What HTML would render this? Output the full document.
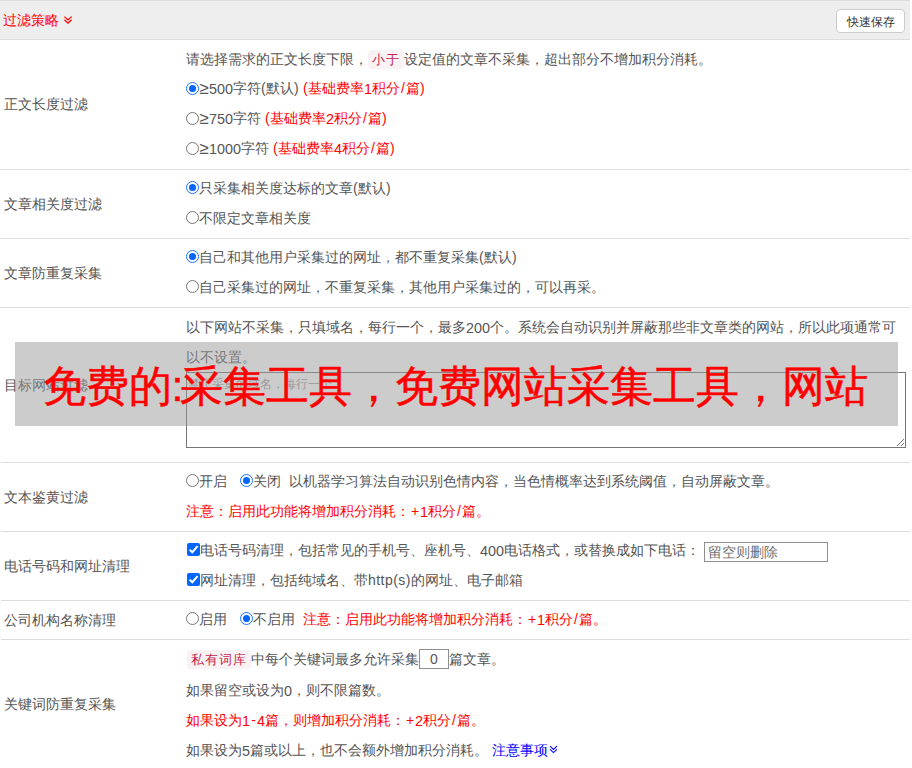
<!DOCTYPE html>
<html><head><meta charset="utf-8">
<style>
*{box-sizing:border-box;margin:0;padding:0}
html,body{width:912px;height:768px;overflow:hidden;background:#fff}
body{font-family:"Liberation Sans",sans-serif;font-size:14px;color:#555;position:relative}
.hd{position:absolute;left:0;top:0;width:910px;height:40px;background:#eee;border-top:1px solid #ddd;border-bottom:1px solid #ddd}
.hd .t{position:absolute;left:3px;top:9px;line-height:20px;color:#f00;font-size:14px}
.hd .chev{position:absolute;left:62px;top:13px}
.btn{position:absolute;left:836px;top:8px;width:69px;height:24px;border:1px solid #ccc;border-radius:4px;background:#fff;font-size:12px;color:#333;text-align:center;line-height:24px}
.row{position:absolute;left:0;width:910px;border-bottom:1px solid #ddd}
.lab{position:absolute;left:4px;top:0;bottom:0;display:flex;align-items:center}
.ln{position:absolute;left:186px;height:30px;line-height:30px;white-space:nowrap}
.ln>.in{position:relative;top:1px}
.ln.u .rad,.ln.u .chk{top:-2px}
.r{color:#f00}
.rad{display:inline-block;width:13px;height:13px;border:1px solid #777;border-radius:50%;vertical-align:middle;position:relative;top:-1px}
.rad.on{border-color:#1a73ff}
.rad.on:after{content:"";position:absolute;left:2px;top:2px;width:7px;height:7px;border-radius:50%;background:#0066ff}
.chk{display:inline-block;width:13px;height:13px;background:#0066ff;border-radius:2px;vertical-align:middle;position:relative;top:-1px;margin-left:1px}
.chk svg{position:absolute;left:0;top:0}
.code{display:inline-block;background:#f9f2f4;color:#c7254e;border-radius:4px;padding:0 4px;line-height:19px;font-size:13px;letter-spacing:1px;vertical-align:top;margin-top:6px}
.d{font-size:14.4px;position:relative;top:1px}
.ge{font-size:17px;padding:0 .33px;line-height:1;position:relative;top:1px}
.sl{padding:0 1.05px}
.pl{padding:0 .9px}
.mi{padding:0 1.15px}
.pa{letter-spacing:.33px}
.lt{letter-spacing:.47px}
.ov{position:absolute;left:15px;top:342px;width:883px;height:84px;background:rgba(153,153,153,0.5);color:#f00;font-size:43px;line-height:84px;white-space:nowrap}
.ov span.tx{position:absolute;left:27.5px;top:2px;-webkit-text-stroke:0.5px #f00}
.ov .cl{letter-spacing:-3px}
</style></head><body>
<div class="hd"><span class="t">过滤策略</span>
<svg class="chev" width="12" height="12" viewBox="0 0 12 12"><path d="M2.4 2.6L6 5.9L9.6 2.6M2.4 5.8L6 9.1L9.6 5.8" fill="none" stroke="#f00" stroke-width="1.25"/></svg>
<div class="btn">快速保存</div></div>

<div class="row" style="top:40px;height:130px"><div class="lab">正文长度过滤</div></div>
<div class="ln" style="top:43px"><span class="in">请选择需求的正文长度下限，<span class="code">小于</span>设定值的文章不采集，超出部分不增加积分消耗。</span></div>
<div class="ln" style="top:73px"><span class="rad on"></span><span class="ge">≥</span><span class="d">500</span>字符<span class="pa">(</span>默认<span class="pa">)</span> <span class="r"><span class="pa">(</span>基础费率<span class="d">1</span>积分<span class="sl">/</span>篇<span class="pa">)</span></span></div>
<div class="ln" style="top:103px"><span class="rad"></span><span class="ge">≥</span><span class="d">750</span>字符 <span class="r"><span class="pa">(</span>基础费率<span class="d">2</span>积分<span class="sl">/</span>篇<span class="pa">)</span></span></div>
<div class="ln" style="top:133px"><span class="rad"></span><span class="ge">≥</span><span class="d">1000</span>字符 <span class="r"><span class="pa">(</span>基础费率<span class="d">4</span>积分<span class="sl">/</span>篇<span class="pa">)</span></span></div>

<div class="row" style="top:170px;height:69px"><div class="lab" style="top:2px">文章相关度过滤</div></div>
<div class="ln u" style="top:173px"><span class="rad on"></span>只采集相关度达标的文章<span class="pa">(</span>默认<span class="pa">)</span></div>
<div class="ln u" style="top:203px"><span class="rad"></span>不限定文章相关度</div>

<div class="row" style="top:239px;height:69px"><div class="lab" style="top:2px">文章防重复采集</div></div>
<div class="ln u" style="top:242px"><span class="rad on"></span>自己和其他用户采集过的网址，都不重复采集<span class="pa">(</span>默认<span class="pa">)</span></div>
<div class="ln u" style="top:272px"><span class="rad"></span>自己采集过的网址，不重复采集，其他用户采集过的，可以再采。</div>

<div class="row" style="left:1px;width:909px;top:308px;height:155px"><div class="lab" style="top:2px;left:3px">目标网站过滤</div></div>
<div class="ln" style="top:312px">以下网站不采集，只填域名，每行一个，最多<span class="d">200</span>个。系统会自动识别并屏蔽那些非文章类的网站，所以此项通常可</div>
<div class="ln" style="top:342px">以不设置。</div>
<div style="position:absolute;left:186px;top:372px;width:720px;height:76px;border:1px solid #767676;font-size:12px;color:#999;padding:3px 1px;line-height:17px">禁止采集的域名，每行一个
<svg style="position:absolute;right:0px;bottom:0px" width="10" height="10" viewBox="0 0 10 10"><path d="M9 2L2 9M9 6L6 9" stroke="#777" stroke-width="1"/></svg></div>

<div class="row" style="left:1px;width:909px;top:463px;height:69px"><div class="lab" style="top:2px;left:3px">文本鉴黄过滤</div></div>
<div class="ln u" style="top:466px"><span class="rad"></span>开启<span class="rad on" style="margin-left:13px"></span>关闭<span style="margin-left:8px">以机器学习算法自动识别色情内容，当色情概率达到系统阈值，自动屏蔽文章。</span></div>
<div class="ln r" style="top:496px">注意：启用此功能将增加积分消耗：<span class="pl">+</span><span class="d">1</span>积分<span class="sl">/</span>篇。</div>

<div class="row" style="left:1px;width:909px;top:532px;height:69px"><div class="lab" style="top:2px;left:3px">电话号码和网址清理</div></div>
<div class="ln u" style="top:535px"><span class="chk"><svg width="13" height="13" viewBox="0 0 13 13"><path d="M2.6 6.6L5.3 9.2L10.6 3.2" fill="none" stroke="#fff" stroke-width="2"/></svg></span>电话号码清理，包括常见的手机号、座机号、<span class="d">400</span>电话格式，或替换成如下电话：<span style="display:inline-block;width:124px;height:20px;border:1px solid #8f8f8f;vertical-align:top;margin-top:7px;margin-left:4px;line-height:18px;padding-left:3px;color:#6f6f6f;font-size:14px">留空则删除</span></div>
<div class="ln u" style="top:565px"><span class="chk"><svg width="13" height="13" viewBox="0 0 13 13"><path d="M2.6 6.6L5.3 9.2L10.6 3.2" fill="none" stroke="#fff" stroke-width="2"/></svg></span>网址清理，包括纯域名、带<span class="lt">http(s)</span>的网址、电子邮箱</div>

<div class="row" style="left:1px;width:909px;top:601px;height:39px"><div class="lab" style="top:2px;left:3px">公司机构名称清理</div></div>
<div class="ln u" style="top:604px"><span class="rad"></span>启用<span class="rad on" style="margin-left:13px"></span>不启用<span class="r" style="margin-left:8px">注意：启用此功能将增加积分消耗：<span class="pl">+</span><span class="d">1</span>积分<span class="sl">/</span>篇。</span></div>

<div class="row" style="left:1px;width:909px;top:640px;height:129px"><div class="lab" style="top:2px;left:3px">关键词防重复采集</div></div>
<div class="ln" style="top:644px"><span class="code" style="margin-left:1px">私有词库</span>中每个关键词最多允许采集<span style="display:inline-block;width:30px;height:20px;border:1px solid #8f8f8f;vertical-align:top;margin-top:5px;line-height:18px;text-align:center">0</span>篇文章。</div>
<div class="ln" style="top:674px;padding-top:1px">如果留空或设为<span class="d">0</span>，则不限篇数。</div>
<div class="ln r" style="top:704px;padding-top:1px">如果设为<span class="d">1</span><span class="mi">-</span><span class="d">4</span>篇，则增加积分消耗：<span class="pl">+</span><span class="d">2</span>积分<span class="sl">/</span>篇。</div>
<div class="ln" style="top:734px;padding-top:1px">如果设为<span class="d">5</span>篇或以上，也不会额外增加积分消耗。 <span style="color:#00f">注意事项</span><svg width="9" height="9" viewBox="0 0 9 9" style="vertical-align:middle;margin-left:1px;position:relative;top:-2px"><path d="M1 1.2L4.5 4.4L8 1.2M1 4.4L4.5 7.6L8 4.4" fill="none" stroke="#00f" stroke-width="1.1"/></svg></div>

<div class="ov"><span class="tx">免费的<span class="cl">:</span>采集工具，免费网站采集工具，网站</span></div>
</body></html>
